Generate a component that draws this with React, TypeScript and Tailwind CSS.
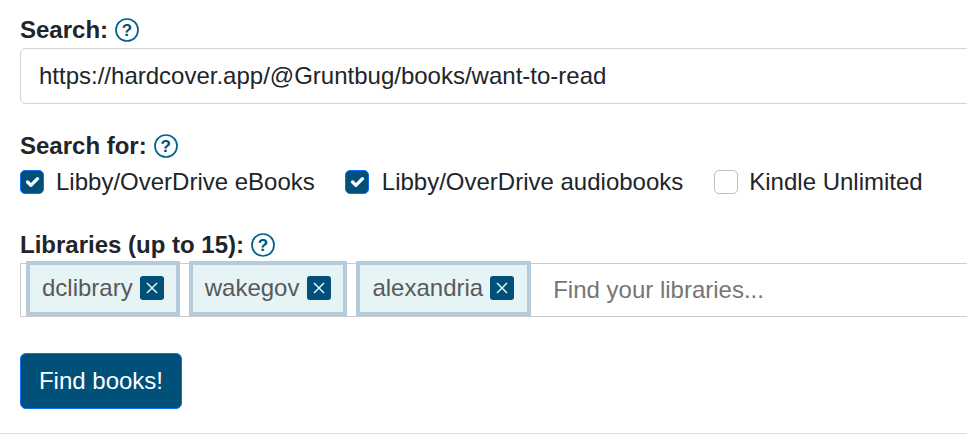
import React from "react";

function Help() {
  return (
    <span className="relative ml-[7px] inline-flex h-6 w-6 items-center justify-center text-[17px] font-bold leading-none text-[#00507a]">
      <svg className="absolute inset-0" width="24" height="24" viewBox="0 0 24 24" fill="none">
        <circle cx="12" cy="12" r="11" stroke="#00618f" strokeWidth="1.7" />
      </svg>
      ?
    </span>
  );
}

function Check({ checked, label, className, labelClass = "ml-3" }: { checked?: boolean; label: string; className: string; labelClass?: string }) {
  return (
    <label className={"flex items-center " + className}>
      {checked ? (
        <span className="flex h-6 w-6 items-center justify-center rounded-[5px] border border-[#0d6efd] bg-[#00507a]">
          <svg width="22" height="22" viewBox="0 0 20 20" fill="none">
            <path d="m6 10 3 3 6-6" stroke="#fff" strokeWidth="3" strokeLinecap="round" strokeLinejoin="round" />
          </svg>
        </span>
      ) : (
        <span className="h-6 w-6 rounded-[5px] border border-[#bfbfbf] bg-white" />
      )}
      <span className={labelClass}>{label}</span>
    </label>
  );
}

function Tag({ name, className, gap = "ml-[7px]" }: { name: string; className: string; gap?: string }) {
  return (
    <span className={"-mt-[3px] flex h-[55px] items-center border-4 border-[#b5cbdb] bg-[#e6f4f6] pl-3 text-[#595959] [font-kerning:none] " + className}>
      <span className="-mt-[2px]">{name}</span>
      <span className={"-mt-[2px] flex h-6 w-6 items-center justify-center rounded-[3px] bg-[#00507a] " + gap}>
        <svg width="14" height="14" viewBox="0 0 14 14" fill="none">
          <path d="m2 2 10 10M12 2 2 12" stroke="#e6f4f6" strokeWidth="1.5" />
        </svg>
      </span>
    </span>
  );
}

export default function App() {
  return (
    <div className="h-[441px] w-[967px] overflow-hidden bg-white font-['Liberation_Sans',sans-serif] text-[24px] leading-[36px] text-[#212529]">
      <div className="h-[434px] border-b border-[#dedede] pl-5">
        <div className="flex h-[48px] items-center pt-[12px] font-bold">
          Search:
          <Help />
        </div>
        <div className="flex h-14 w-[1000px] items-center rounded-[6px] border border-[#ced4da] bg-white pl-[18px]">
          https://hardcover.app/@Gruntbug/books/want-to-read
        </div>
        <div className="mt-[24px] flex h-9 items-center font-bold">
          Search for:
          <Help />
        </div>
        <div className="flex h-9 items-center">
          <Check checked label="Libby/OverDrive eBooks" className="" />
          <Check checked label="Libby/OverDrive audiobooks" className="ml-[30px]" labelClass="ml-[13px]" />
          <Check label="Kindle Unlimited" className="ml-[31px]" labelClass="ml-[11px]" />
        </div>
        <div className="mt-[27px] flex h-9 items-center font-bold">
          Libraries (up to 15):
          <Help />
        </div>
        <div className="flex h-[54px] w-[1000px] items-start border border-[#cccccc] bg-white pl-[5px]">
          <Tag name="dclibrary" className="pr-3" />
          <Tag name="wakegov" className="ml-[9px] pr-3" gap="ml-[8px]" />
          <Tag name="alexandria" className="ml-[9px] pr-[13px]" />
          <span className="ml-[22px] self-center text-[#757575] [font-kerning:none]">Find your libraries...</span>
        </div>
        <button className="mt-9 flex h-14 w-[162px] items-center justify-center rounded-[6px] border border-[#0d6efd] bg-[#00507a] text-white">
          Find books!
        </button>
      </div>
    </div>
  );
}
